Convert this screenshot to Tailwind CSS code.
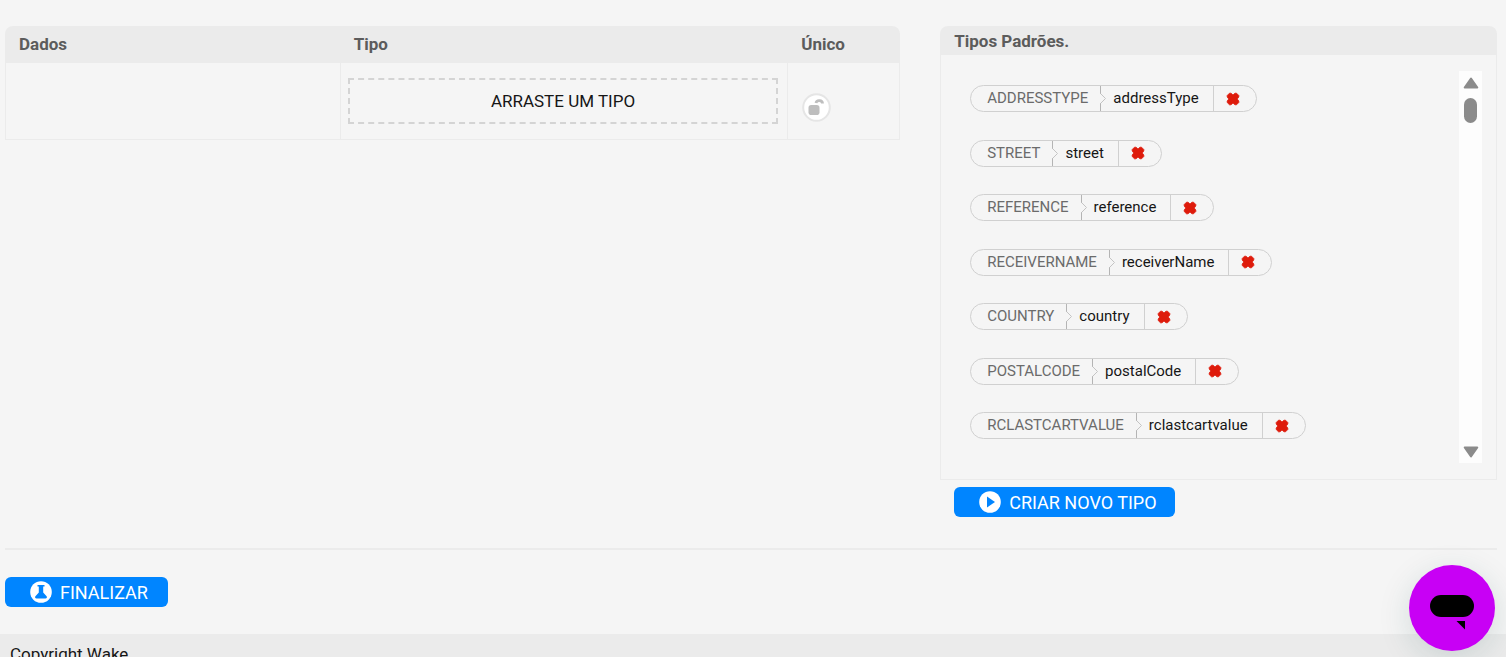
<!DOCTYPE html>
<html lang="pt-BR">
<head>
<meta charset="utf-8">
<title>Tipos</title>
<script src="https://cdn.jsdelivr.net/npm/@tailwindcss/browser@4"></script>
</head>
<body class="h-screen overflow-hidden bg-[#f5f5f5] font-[Roboto,sans-serif] text-[17px] text-[#161616]">
<svg class="hidden" aria-hidden="true">
  <symbol id="remove" viewBox="0 0 14 14"><path d="M3.5 1.2 5 1.2 7 3 9 1.200 10.500 1.200 12.800 3.500 12.800 5 11.200 7 12.800 9 12.800 10.500 10.500 12.800 9 12.800 7 11 5 12.800 3.500 12.800 1.200 10.500 1.200 9 2.800 7 1.200 5 1.200 3.500Z" fill="#de1b0b" stroke="#de1b0b" stroke-width=".8" stroke-linejoin="round"/></symbol>
  <symbol id="notch" viewBox="0 0 8 25"><path d="M.5 0V8M.5 17V25" fill="none" stroke="#b4b4b4" stroke-width="1"/><path d="M.5 7.500 5.500 12.500 .5 17.500" fill="none" stroke="#c4c4c4"/></symbol>
</svg>
<main class="pt-[26px] pr-[9px] pl-[5px]">
  <div class="flex items-start gap-10">
    <table class="w-3/5 table-fixed border-separate border-spacing-0">
      <thead>
        <tr class="h-[37px] bg-[#ebebeb] text-left text-[#5c5c5c]">
          <th class="w-[37.5%] rounded-tl-lg pl-3.5 font-bold">Dados</th>
          <th class="w-1/2 pl-[13px] font-bold">Tipo</th>
          <th class="w-[12.5%] rounded-tr-lg pl-[13px] font-bold">Único</th>
        </tr>
      </thead>
      <tbody>
        <tr class="h-[77px]">
          <td class="border-x border-b border-[#ebebeb]"></td>
          <td class="border-r border-b border-[#ebebeb] pr-[9px] pl-[7px]">
            <div class="flex h-[46px] items-center justify-center border-2 border-dashed border-[#d4d4d4] pt-px">ARRASTE UM TIPO</div>
          </td>
          <td class="border-r border-b border-[#ebebeb] pt-3 pl-3.5">
            <button type="button" aria-label="Único" class="block size-[29px]">
              <svg viewBox="0 0 29 29" class="size-full"><circle cx="14.500" cy="14.500" r="13.300" fill="#fff" stroke="#e5e5e5" stroke-width="2"/><rect x="6.500" y="12" width="11" height="10" rx="2.800" fill="#bebebe"/><path d="M14 10C14.500 6.800 20.500 6.800 20.500 10.500" fill="none" stroke="#bebebe" stroke-width="2.800"/></svg>
            </button>
          </td>
        </tr>
      </tbody>
    </table>

    <section class="flex-1">
      <h2 class="h-[29px] rounded-t-lg bg-[#ebebeb] pl-3.5 leading-[30px] font-bold text-[#5c5c5c]">Tipos Padrões.</h2>
      <div class="flex justify-between border border-t-0 border-[#ebebeb] pt-4 pr-3.5 pb-4 pl-[29px]">
        <ul id="types" class="flex h-[384px] flex-col justify-between pt-3.5 pb-4 text-[15px]"></ul>
        <div class="flex h-[392px] w-[23px] flex-col items-center bg-[#fdfdfd] pt-1.5 pb-[5px]">
          <svg viewBox="0 0 16 12" class="h-3 w-4"><path d="M8 1.500 14.300 10.500H1.700Z" fill="#8b8b8b" stroke="#8b8b8b" stroke-width="2" stroke-linejoin="round"/></svg>
          <div class="mt-[9px] h-[25px] w-[13px] rounded-full bg-[#8b8b8b]"></div>
          <svg viewBox="0 0 16 12" class="mt-auto h-3 w-4"><path d="M8 10.500 14.300 1.500H1.700Z" fill="#8b8b8b" stroke="#8b8b8b" stroke-width="2" stroke-linejoin="round"/></svg>
        </div>
      </div>
      <button type="button" class="mt-[7px] ml-3.5 flex h-[30px] items-center gap-2 rounded-md bg-[#0085ff] pr-[18px] pl-[25px] text-lg leading-none text-white">
        <svg viewBox="0 0 22 22" class="size-[22px]"><circle cx="11" cy="11" r="10.800" fill="#fff"/><path d="M8 5.500 16 11 8 16.500Z" fill="#0085ff"/></svg>
        <span class="pt-0.5">CRIAR NOVO TIPO</span>
      </button>
    </section>
  </div>
  <hr class="mt-[31px] border-t-2 border-[#ebebeb]">
  <button type="button" class="mt-[27px] flex h-[30px] items-center gap-2 rounded-md bg-[#0085ff] pr-5 pl-[25px] text-lg leading-none text-white">
    <svg viewBox="0 0 22 22" class="size-[22px]"><circle cx="11" cy="11" r="10.800" fill="#fff"/><path d="M7.500 4H14.500V5.500H13.200V11.500L16.800 15.500Q17.500 17.500 15.500 17.500H6.500Q4.500 17.500 5.200 15.500L8.800 11.500V5.500H7.500Z" fill="#0085ff"/></svg>
    <span class="pt-0.5">FINALIZAR</span>
  </button>
</main>
<footer class="mt-[27px] bg-[#ebebeb] pt-2 pb-4 pl-2.5">Copyright Wake</footer>

<button type="button" aria-label="Chat" class="fixed right-[11px] bottom-1.5 size-[86px] rounded-full bg-[#c800f5] shadow-[0_8px_32px_rgba(23,73,77,0.15)]">
  <svg viewBox="0 0 86 86" class="size-full"><rect x="21" y="30" width="44" height="22" rx="11" fill="#000"/><path d="M47.500 56H56V64.500Z" fill="#000"/></svg>
</button>

<script>
  const types = [
    ["ADDRESSTYPE", "addressType"],
    ["STREET", "street"],
    ["REFERENCE", "reference"],
    ["RECEIVERNAME", "receiverName"],
    ["COUNTRY", "country"],
    ["POSTALCODE", "postalCode"],
    ["RCLASTCARTVALUE", "rclastcartvalue"],
  ];
  document.getElementById("types").innerHTML = types.map(([label, value]) => `
    <li class="flex h-[27px] w-max items-stretch rounded-full border border-[#d0d0d0] leading-[25px]">
      <span class="pr-3 pl-4 text-[#6b6b6b]">${label}</span>
      <svg viewBox="0 0 8 25" class="h-[25px] w-2"><use href="#notch"/></svg>
      <span class="pr-3.5 pl-[5px]">${value}</span>
      <button type="button" aria-label="Remover ${value}" class="flex w-[43px] items-center border-l border-[#d0d0d0] pl-3">
        <svg viewBox="0 0 14 14" class="size-3.5"><use href="#remove"/></svg>
      </button>
    </li>`).join("");
</script>
</body>
</html>
